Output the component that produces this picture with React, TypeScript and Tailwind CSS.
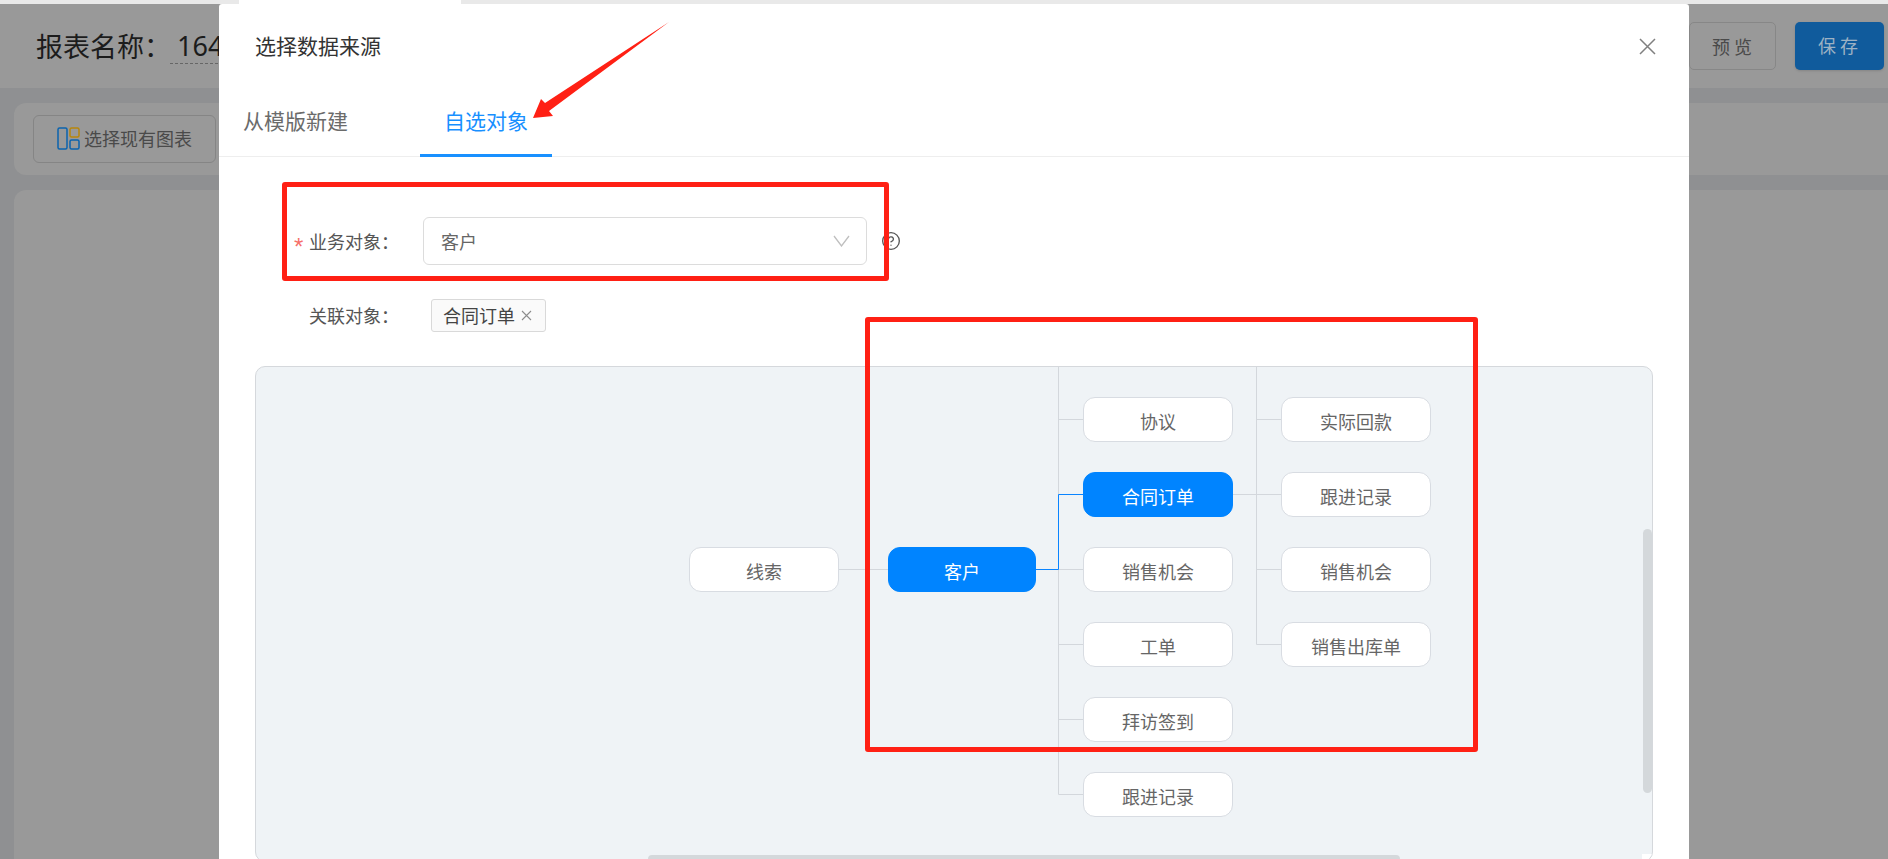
import React from "react";
import { CircleHelp } from "lucide-react";

const FONT = "font-['Microsoft_YaHei','Noto_Sans_CJK_SC','Noto_Sans',sans-serif]";

function Node({ label, pos, active }: { label: string; pos: string; active?: boolean }) {
  return (
    <div
      className={
        "absolute flex h-[45px] items-center justify-center rounded-[12px] border pt-[2px] text-[18px] leading-none " +
        pos +
        (active ? " border-[#0084ff] bg-[#0084ff] text-white" : " border-[#d8dce2] bg-white text-[#666666]")
      }
    >
      {label}
    </div>
  );
}

function Connectors() {
  const g = "#d3d7dc";
  const b = "#0a84ff";
  return (
    <svg className="absolute left-0 top-0 h-[500px] w-[1396px]" fill="none" strokeWidth="1">
      <path stroke={g} d="M802.5 0V427.5H827M802.5 52.5H827M802.5 202.5H827M802.5 277.5H827M802.5 352.5H827" />
      <path stroke={g} d="M1000.5 0V277.5H1025M1000.5 52.5H1025M976 127.5H1025M1000.5 202.5H1025" />
      <path stroke={g} d="M583 202.5H632" />
      <path stroke={b} d="M780 202.5H802.5V127.5H827" />
    </svg>
  );
}

export default function App() {
  return (
    <div className={"relative flex h-[859px] w-[1888px] flex-col overflow-hidden bg-[#8f9092] " + FONT}>
      {/* browser strip */}
      <div className="flex h-[4px] shrink-0 bg-[#e9e9e9] pl-[239px]">
        <div className="h-full w-[222px] bg-white" />
      </div>

      {/* page header */}
      <header className="flex h-[84px] shrink-0 items-center justify-between bg-[#999999] pl-[36px] pr-[4px]">
        <div className="flex items-center text-[27px] text-[#1c1c1c]">
          <span>报表名称：</span>
          <span className="ml-[-1px] border-b border-dashed border-[#666666] pl-[7px] pr-[40px] pt-[1px] font-['Noto_Sans'] leading-[34px]">
            164
          </span>
        </div>
        <div className="flex items-center gap-[19px]">
          <button className="h-[48px] w-[87px] rounded-[5px] border border-[#878787] pl-[22px] text-left text-[18px] tracking-[4px] text-[#4a4a4a]">
            预览
          </button>
          <button className="h-[48px] w-[89px] rounded-[5px] bg-[#105b9c] pb-[2px] pl-[1px] text-[18px] tracking-[4px] text-[#9db2c4] shadow-sm">
            保存
          </button>
        </div>
      </header>

      {/* page body */}
      <main className="flex min-h-0 flex-1 flex-col gap-[15px] pl-[14px] pt-[15px]">
        <div className="flex h-[72px] shrink-0 items-center rounded-l-[12px] bg-[#999999] pl-[19px]">
          <button className="flex h-[48px] w-[183px] items-center justify-center gap-[4px] rounded-[6px] border border-[#858585] pb-[1px] text-[18px] text-[#4a4a4a]">
            <svg width="23" height="23" viewBox="0 0 23 23" fill="none" strokeWidth="1.5">
              <rect x="1" y="1" width="9" height="21" rx="1.5" stroke="#0a63ae" />
              <rect x="13" y="1" width="9" height="9" rx="1.5" stroke="#b8860b" />
              <rect x="13" y="13" width="9" height="9" rx="1.5" stroke="#0a63ae" />
            </svg>
            <span>选择现有图表</span>
          </button>
        </div>
        <div className="flex-1 rounded-tl-[12px] bg-[#999999]" />
      </main>

      {/* modal */}
      <section className="absolute bottom-[-3px] left-[219px] top-[4px] flex w-[1470px] flex-col rounded-t-[3px] bg-white">
        <div className="flex h-[84px] shrink-0 items-center justify-between pl-[36px] pr-[33px]">
          <h2 className="text-[21px] text-[#333333]">选择数据来源</h2>
          <svg width="17" height="17" viewBox="0 0 17 17" stroke="#808080" strokeWidth="1.5" fill="none">
            <path d="M1 1L16 16M16 1L1 16" />
          </svg>
        </div>

        <div className="flex h-[69px] shrink-0 gap-[72px] border-b border-[#eeeeee] pl-[24px] text-[21px]">
          <div className="flex items-center pb-[2px] text-[#6b6b6b]">从模版新建</div>
          <div className="mb-[-1px] flex w-[132px] items-center justify-center border-b-[3px] border-[#1890ff] text-[#1890ff]">
            自选对象
          </div>
        </div>

        <div className="mt-[60px] flex h-[48px] shrink-0 items-center pl-[75px] text-[18px]">
          <span className="w-[15px] pt-[11px] font-['Liberation_Sans'] text-[24px] font-light leading-none text-[#f6706a]">*</span>
          <label className="w-[114px] pt-[1px] text-[#555555]">业务对象：</label>
          <div className="flex h-[48px] w-[444px] items-center justify-between rounded-[6px] border border-[#dcdcdc] pl-[17px] pr-[16px] text-[#666666]">
            <span className="pt-[1px]">客户</span>
            <svg width="17" height="12" viewBox="0 0 17 12" fill="none" stroke="#bfbfbf" strokeWidth="1.3">
              <path d="M1 1L8.5 11L16 1" />
            </svg>
          </div>
          <CircleHelp className="ml-[14px] text-[#555555]" size={20} strokeWidth={1.6} />
        </div>

        <div className="mt-[34px] flex h-[33px] shrink-0 items-center pl-[90px] text-[18px]">
          <label className="w-[122px] text-[#555555]">关联对象：</label>
          <div className="flex h-[33px] w-[115px] items-center gap-[6px] rounded-[3px] border border-[#d9d9d9] bg-[#fafafa] pl-[11px] text-[#444444]">
            <span>合同订单</span>
            <svg width="11" height="11" viewBox="0 0 11 11" fill="none" stroke="#8c8c8c" strokeWidth="1.1">
              <path d="M1 1L10 10M10 1L1 10" />
            </svg>
          </div>
        </div>

        <div className="relative mx-[36px] mt-[34px] min-h-0 flex-1 overflow-hidden rounded-[10px] border border-[#d5d8dc] bg-[#eff3f6]">
          <Connectors />
          <Node label="线索" pos="w-[150px] left-[433px] top-[180px]" />
          <Node label="客户" pos="w-[148px] left-[632px] top-[180px]" active />
          <Node label="协议" pos="w-[150px] left-[827px] top-[30px]" />
          <Node label="合同订单" pos="w-[150px] left-[827px] top-[105px]" active />
          <Node label="销售机会" pos="w-[150px] left-[827px] top-[180px]" />
          <Node label="工单" pos="w-[150px] left-[827px] top-[255px]" />
          <Node label="拜访签到" pos="w-[150px] left-[827px] top-[330px]" />
          <Node label="跟进记录" pos="w-[150px] left-[827px] top-[405px]" />
          <Node label="实际回款" pos="w-[150px] left-[1025px] top-[30px]" />
          <Node label="跟进记录" pos="w-[150px] left-[1025px] top-[105px]" />
          <Node label="销售机会" pos="w-[150px] left-[1025px] top-[180px]" />
          <Node label="销售出库单" pos="w-[150px] left-[1025px] top-[255px]" />
          {/* scrollbars */}
          <div className="absolute left-[1387px] top-[162px] h-[264px] w-[9px] rounded-[5px] bg-[#d4d8db]" />
          <div className="absolute bottom-0 left-[392px] h-[6px] w-[752px] rounded-t-[4px] bg-[#d4d8db]" />
          <div className="absolute bottom-0 right-0 h-[7px] w-[10px] bg-white" />
        </div>
      </section>

      {/* annotations drawn over the screenshot */}
      <div className="absolute left-[282px] top-[182px] h-[99px] w-[607px] rounded-[3px] border-[5px] border-[#ff2014]" />
      <div className="absolute left-[865px] top-[317px] h-[435px] w-[613px] rounded-[3px] border-[5px] border-[#ff2014]" />
      <svg className="absolute left-[520px] top-[15px] h-[110px] w-[160px]" viewBox="520 15 160 110">
        <path fill="#ff2014" d="M669 22L545 103L541 99L533 118L553 116L549 111Z" />
      </svg>
    </div>
  );
}
